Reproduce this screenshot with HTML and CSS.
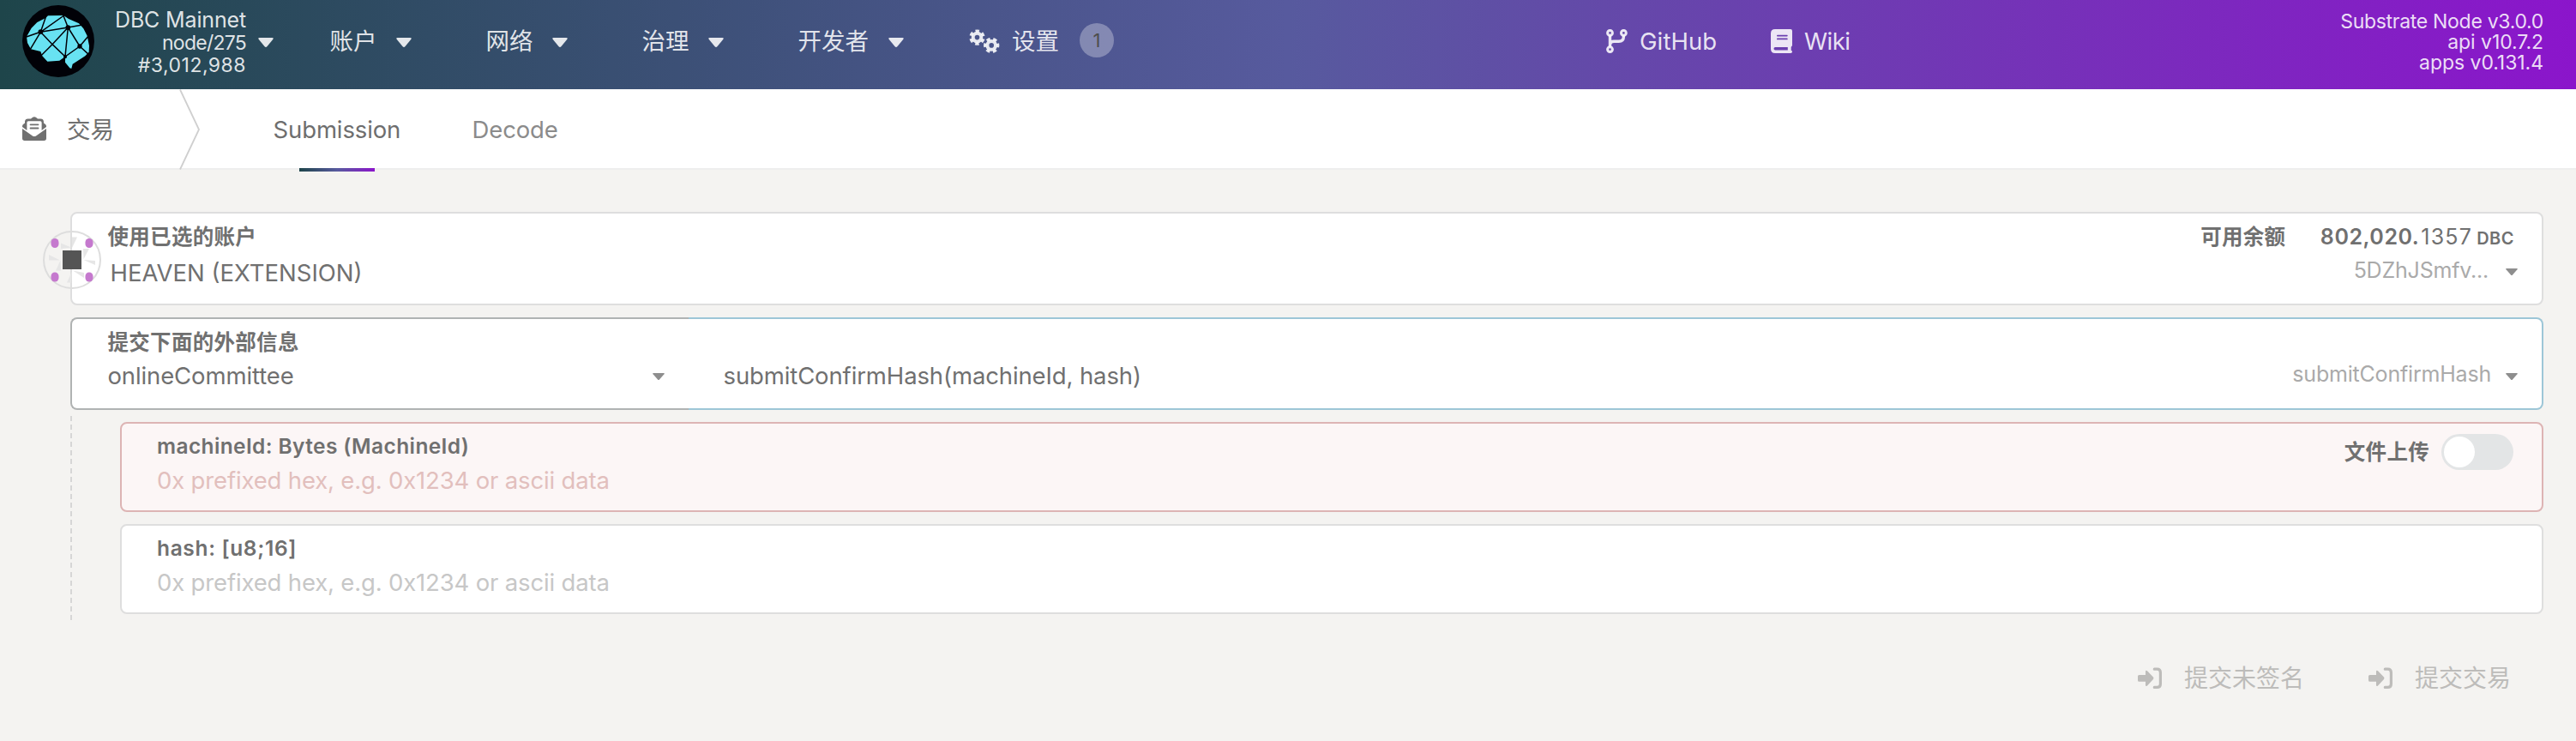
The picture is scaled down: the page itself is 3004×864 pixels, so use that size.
FILE: index.html
```html
<!DOCTYPE html>
<html lang="zh">
<head>
<meta charset="utf-8">
<title>DBC Mainnet</title>
<link rel="stylesheet" href="styles.css">
</head>
<body>
<svg class="defs" width="0" height="0" aria-hidden="true">
  <symbol id="caret" viewBox="0 0 18 11"><path d="M1.6 0H16.4Q18.6 0 17.2 2L10.6 10Q9 11.8 7.4 10L.8 2Q-.6 0 1.6 0Z"/></symbol>
  <symbol id="caret-small" viewBox="0 0 14 8"><path d="M.8 0H13.2Q14.4 0 13.5 1.2L8 7.4Q7 8.5 6 7.4L.5 1.2Q-.4 0 .8 0Z"/></symbol>
  <symbol id="sign-in" viewBox="0 0 28 26">
    <path d="M1.5 9H9V5Q9.2 2.9 11 4.3L18 11.6Q19 12.9 18 14.1L11 21.4Q9.2 22.8 9 20.7V16.8H1.5Q0 16.8 0 15.3V10.5Q0 9 1.5 9Z"/>
    <path d="M19.3 2.2H22.5Q26.4 2.2 26.4 6.2V19.4Q26.4 23.4 22.5 23.4H19.3" fill="none" stroke="currentColor" stroke-width="3.2" stroke-linecap="round"/>
  </symbol>
</svg>

<header class="topbar">
  <svg class="logo" viewBox="78 18 252 252">
    <circle cx="204" cy="144" r="126" fill="#010107"/>
    <path d="M93 128L110 98L130 78L158 64L168 55L222 54L240 66L276 82L292 100L305 125L312 160L311 182L298 196L254 224L250 240L244 238L228 218V198L208 212L166 215L148 196L142 180L108 172L96 150Z" fill="#68e2f2"/>
    <path d="M142 112L92 129M142 112L106 172M142 112L162 54M142 112L224 54M142 112L238 96L288 87M142 112L183 155L228 198M238 96L183 155L144 194M238 96L220 50M238 96L228 198L279 162M238 96L279 162L310 125M279 162L310 190" fill="none" stroke="#010107" stroke-width="4.5"/>
    <g fill="#010107"><circle cx="142" cy="111" r="8.5"/><circle cx="238" cy="96" r="8.5"/><circle cx="279" cy="162" r="8"/><circle cx="228" cy="199" r="6"/></g>
  </svg>
  <div class="chain">
    <div class="chain-name">DBC Mainnet</div>
    <div class="chain-node">node/275</div>
    <div class="chain-block">#3,012,988</div>
  </div>
  <svg class="caret chain-caret"><use href="#caret"/></svg>
  <nav class="menu">
    <div class="menu-item">账户<svg class="caret"><use href="#caret"/></svg></div>
    <div class="menu-item">网络<svg class="caret"><use href="#caret"/></svg></div>
    <div class="menu-item">治理<svg class="caret"><use href="#caret"/></svg></div>
    <div class="menu-item">开发者<svg class="caret"><use href="#caret"/></svg></div>
  </nav>
  <div class="settings">
    <svg class="cogs outline" viewBox="0 0 36 28">
      <g transform="translate(9.5 9.6)">
        <circle r="4.8" stroke-width="4"/>
        <circle r="7.6" stroke-width="3.2" stroke-dasharray="4.4 3.56" transform="rotate(13.5)"/>
      </g>
      <g transform="translate(26.2 18.9)">
        <circle r="4.8" stroke-width="4"/>
        <circle r="7.6" stroke-width="3.2" stroke-dasharray="4.4 3.56" transform="rotate(-16.5)"/>
      </g>
    </svg>
    <span>设置</span>
    <span class="badge">1</span>
  </div>
  <div class="links">
    <div class="link github">
      <svg class="link-icon outline" viewBox="0 0 25 28" stroke-width="3">
        <circle cx="4.5" cy="4.4" r="2.9"/><circle cx="4.5" cy="23.6" r="2.9"/><circle cx="20.4" cy="4.4" r="2.9"/>
        <path d="M4.5 7.4V20.6M20.4 7.4V8.8Q20.4 14.3 14.8 14.3H9Q4.9 14.3 4.5 18" stroke-width="3.4"/>
      </svg>
      <span>GitHub</span>
    </div>
    <div class="link wiki">
      <svg class="link-icon" viewBox="0 0 25 28">
        <path fill-rule="evenodd" d="M5 0H23Q25 0 25 2V18.8Q25 20 23.7 20.7V24.7Q25 24.8 25 26.3Q25 28 23.3 28H5Q0 28 0 23V5Q0 0 5 0ZM7.8 6.8Q7 6.8 7 7.6T7.8 8.5H18.9Q19.7 8.5 19.7 7.6T18.9 6.8ZM7.8 10.5Q7 10.5 7 11.4T7.8 12.3H18.9Q19.7 12.3 19.7 11.4T18.9 10.5ZM5.2 21.1Q3.5 21.1 3.5 22.8T5.2 24.5H19.8V21.1Z"/>
      </svg>
      <span>Wiki</span>
    </div>
  </div>
  <div class="versions">
    <div>Substrate Node v3.0.0</div>
    <div class="version">api v10.7.2</div>
    <div class="version">apps v0.131.4</div>
  </div>
</header>

<div class="tabs">
  <svg class="envelope" viewBox="0 0 28 28">
    <path d="M11.5 1.3Q14 -.9 16.5 1.3L18 2.4H21.5Q24.6 2.4 24.9 5.5L25 7.4L27 9Q28 9.9 28 11.5V25.3Q28 28 25.3 28H2.7Q0 28 0 25.3V11.5Q0 9.9 1 9L3 7.4V5.5Q3.4 2.4 6.5 2.4H10Z" fill="#707070"/>
    <path d="M7 5.3H21Q22.6 5.3 22.6 6.9V16L28 12V14L16 22.4Q14 23.6 12 22.4L0 14V12L5.4 16V6.9Q5.4 5.3 7 5.3Z" fill="#fff"/>
    <path d="M9.5 9.3H18.5M9.5 13.5H18.5" stroke="#707070" stroke-width="1.8" stroke-linecap="round"/>
  </svg>
  <div class="section">交易</div>
  <svg class="chevron" viewBox="0 0 24 94"><path d="M1 .5L23 47L1 93.5" fill="none" stroke="#cfcfcf" stroke-width="1.8"/></svg>
  <div class="tab active">Submission</div>
  <div class="tab">Decode</div>
</div>

<main class="page">
  <section class="box account">
    <svg class="identicon" viewBox="0 0 68 68">
      <circle cx="34" cy="34" r="33" fill="none" stroke="#ddd" stroke-width="2"/>
      <path d="M34 7.5H40L34 20ZM47 21H54L47.5 33ZM47.5 34L61 35V40ZM35 46.500L48 49V55ZM34 47.500L33 60.500H28ZM20.500 34.500L21 46.500H15ZM7 28V34.500H20ZM21 14.500V21L33 19.500Z" fill="#e6e6e6"/>
      <g fill="#c579ce"><rect x="9.500" y="9" width="9" height="11" rx="4.500"/><rect x="49.500" y="9" width="9" height="11" rx="4.500"/><rect x="9.500" y="48.500" width="9" height="11" rx="4.500"/><rect x="49.500" y="48.500" width="9" height="11" rx="4.500"/></g>
      <rect x="23" y="23" width="22" height="22" fill="#555"/>
    </svg>
    <div class="field">
      <div class="label">使用已选的账户</div>
      <div class="value account-name">HEAVEN (EXTENSION)</div>
    </div>
    <div class="account-side">
      <div class="balance">
        <span class="label">可用余额</span>
        <span class="amount">802,020.</span>
        <span class="decimals">1357</span>
        <span class="unit">DBC</span>
      </div>
      <div class="hint">5DZhJSmfv...<svg class="caret-small"><use href="#caret-small"/></svg></div>
    </div>
  </section>

  <section class="call">
    <div class="box module">
      <div class="label">提交下面的外部信息</div>
      <div class="value row">onlineCommittee<svg class="caret-small"><use href="#caret-small"/></svg></div>
    </div>
    <div class="box method">
      <div class="value">submitConfirmHash(machineId, hash)</div>
      <div class="hint">submitConfirmHash<svg class="caret-small"><use href="#caret-small"/></svg></div>
    </div>
  </section>

  <section class="params">
    <div class="box param error">
      <div class="field">
        <div class="label name-machine">machineId: Bytes (MachineId)</div>
        <div class="placeholder">0x prefixed hex, e.g. 0x1234 or ascii data</div>
      </div>
      <div class="upload">
        <span class="label">文件上传</span>
        <span class="toggle"></span>
      </div>
    </div>
    <div class="box param">
      <div class="field">
        <div class="label name-hash">hash: [u8;16]</div>
        <div class="placeholder">0x prefixed hex, e.g. 0x1234 or ascii data</div>
      </div>
    </div>
  </section>

  <div class="actions">
    <div class="action"><svg class="sign-in"><use href="#sign-in"/></svg>提交未签名</div>
    <div class="action"><svg class="sign-in"><use href="#sign-in"/></svg>提交交易</div>
  </div>
</main>
</body>
</html>
```
FILE: styles.css
```css
* { box-sizing: border-box; }
body {
  margin: 0;
  min-height: 864px;
  background: #f4f3f1;
  color: #707070;
  font: 27.5px/34px Inter, "Noto Sans CJK SC", sans-serif;
  letter-spacing: -0.12px;
  white-space: nowrap;
}
svg { display: block; flex: none; fill: currentColor; }
.outline { fill: none; stroke: currentColor; }
.defs { position: absolute; }

/* Top bar */
.topbar {
  display: flex;
  align-items: flex-start;
  height: 104px;
  padding: 0 38px 0 26px;
  background: linear-gradient(90deg, #1e454a 0%, #575a9e 50%, #8b15cb 100%);
  color: rgba(255, 255, 255, 0.87);
}
.logo { width: 84px; height: 84px; margin-top: 6px; }
.chain {
  width: 177px;
  padding-top: 10px;
  font-size: 23px;
  line-height: 26.7px;
  text-align: right;
}
.chain-name { font-size: 25px; letter-spacing: -0.15px; }
.chain-node { letter-spacing: -0.75px; }
.chain-block { letter-spacing: 0.48px; }
.caret { width: 18px; height: 11px; }
.chain-caret { margin: 44px 0 0 13.5px; }
.menu { display: flex; gap: 86.5px; margin-left: 66px; line-height: 96px; letter-spacing: 0; }
.menu-item { display: flex; gap: 22.5px; }
.menu-item .caret { margin-top: 44px; }
.settings { display: flex; margin-left: 76.5px; line-height: 96px; letter-spacing: 0; }
.cogs { width: 36px; height: 28px; margin: 34px 14px 0 0; }
.badge {
  width: 40px;
  height: 40px;
  margin: 27px 0 0 24px;
  border-radius: 50%;
  background: rgba(255, 255, 255, 0.3);
  color: #4e4e4e;
  font-size: 22px;
  line-height: 40px;
  text-align: center;
}
.links { display: flex; margin-left: 574px; line-height: 96px; }
.link { display: flex; gap: 14px; }
.github { width: 192px; letter-spacing: 0.1px; }
.wiki { letter-spacing: -0.5px; }
.link-icon { width: 25px; height: 28px; margin-top: 34px; }
.versions {
  margin: 12.6px 0 0 auto;
  font-size: 23px;
  line-height: 24px;
  letter-spacing: -0.3px;
  text-align: right;
}
.version { letter-spacing: -0.05px; }

/* Tabs */
.tabs {
  display: flex;
  height: 94px;
  padding-left: 26px;
  border-bottom: 2px solid #eee;
  background: #fff;
  line-height: 94px;
}
.envelope { width: 28px; height: 28px; margin-top: 32px; }
.section { width: 155px; padding-left: 24px; letter-spacing: 0; }
.chevron { width: 24px; height: 94px; }
.tab { color: #8b8b8b; }
.tab.active {
  position: relative;
  width: 232px;
  margin-left: 85.5px;
  color: #6e6e6e;
}
.tab.active::after {
  content: "";
  position: absolute;
  left: 30.5px;
  top: 92px;
  width: 88px;
  height: 4px;
  background: linear-gradient(90deg, #1e454a, #575a9e 50%, #8b15cb);
}

/* Form */
.page { padding: 49px 38px 0 82px; }
.box {
  border: 2px solid #dedede;
  border-radius: 8px;
  background: #fff;
}
.label {
  font-size: 24.5px;
  line-height: 28px;
  font-weight: 600;
  letter-spacing: 0.3px;
}
.account {
  position: relative;
  display: flex;
  justify-content: space-between;
  height: 109px;
  padding: 13px 31.5px 0 41.5px;
}
.identicon { position: absolute; left: -34px; top: 20px; width: 68px; height: 68px; }
.account-name { margin: 10.6px 0 0 3px; letter-spacing: 0; }
.balance { display: flex; margin-right: 0.5px; font-size: 25px; line-height: 28px; }
.balance .label { margin-right: 40.5px; }
.amount { font-weight: 600; letter-spacing: 0.54px; }
.decimals { margin-left: 2px; letter-spacing: 1.2px; }
.unit { margin-left: 5px; padding-top: 1.5px; font-size: 20px; font-weight: 600; letter-spacing: 0.5px; }
.hint {
  display: flex;
  justify-content: flex-end;
  margin-right: -3.5px;
  color: #aaa;
  font-size: 25px;
  letter-spacing: -0.2px;
}
.account .hint { margin-top: 6px; }
.caret-small { width: 14px; height: 8px; color: #8e8e8e; }
.hint .caret-small { margin: 16px 0 0 20px; }
.account .hint .caret-small { margin-top: 15px; }

.call { display: grid; grid-template-columns: 721px 1fr; height: 108px; margin-top: 14px; }
.module {
  padding: 13px 28px 0 41.5px;
  border-color: #b0b3b3;
  border-right: 0;
  border-radius: 8px 0 0 8px;
}
.row { display: flex; justify-content: space-between; margin-top: 8px; }
.row .caret-small { margin-top: 14px; }
.method {
  display: flex;
  justify-content: space-between;
  padding: 49px 31.5px 0 40.5px;
  border-color: #9dc6d7;
  border-left: 0;
  border-radius: 0 8px 8px 0;
}
.method .hint { margin-top: -2px; }
.method .hint .caret-small { margin-left: 17px; }

.params {
  display: grid;
  gap: 14px;
  margin-top: 7px;
  padding: 7px 0 7px 58px;
  background: repeating-linear-gradient(#d6d6d6 0 6px, transparent 6px 10.087px) left / 2px 100% no-repeat;
}
.param {
  display: flex;
  justify-content: space-between;
  height: 105px;
  padding: 12px 33px 0 41px;
}
.error { border-color: #ddb4b4; background: #fcf6f6; }
.placeholder { margin-top: 8.8px; color: #c7c7c7; letter-spacing: -0.16px; }
.error .placeholder { color: #e2bfbd; }
.name-machine { letter-spacing: 0.38px; }
.name-hash { letter-spacing: 0.65px; }
.upload { display: flex; align-items: center; gap: 14px; height: 42px; }
.toggle {
  width: 84px;
  height: 42px;
  padding: 3px;
  border-radius: 21px;
  background: #e3e5e6;
}
.toggle::before {
  content: "";
  display: block;
  width: 36px;
  height: 36px;
  border-radius: 50%;
  background: #fff;
}

.actions {
  display: flex;
  justify-content: flex-end;
  gap: 75px;
  margin: 47.5px 38px 0 0;
  color: #bdbcba;
  font-size: 28px;
  line-height: 40px;
  letter-spacing: 0;
}
.action { display: flex; gap: 26px; }
.sign-in { width: 28px; height: 26px; margin-top: 7px; }
```
